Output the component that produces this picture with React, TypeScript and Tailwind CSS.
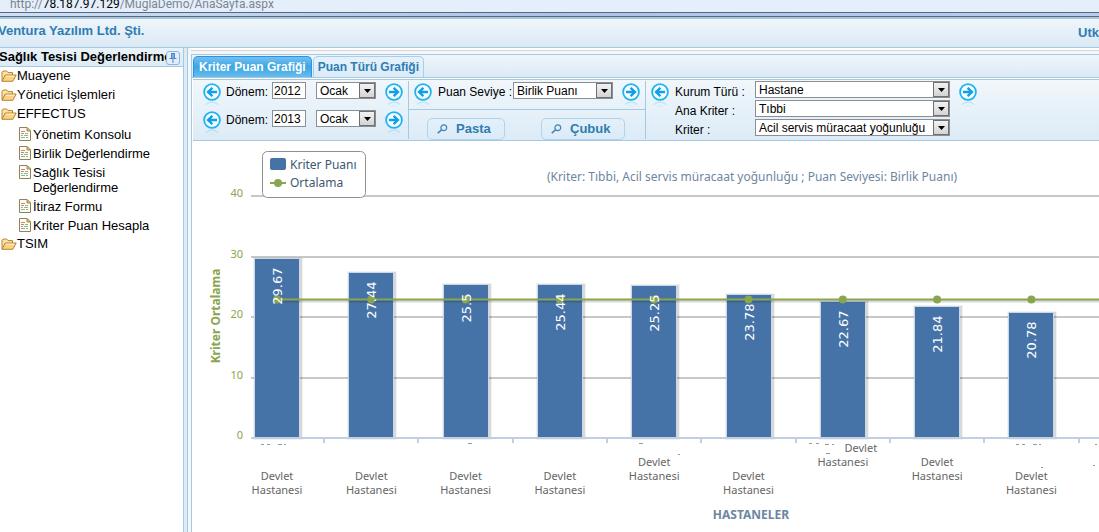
import type { ReactNode } from "react";

const documents = [
  "Yönetim Konsolu",
  "Birlik Değerlendirme",
  "Sağlık Tesisi Değerlendirme",
  "İtiraz Formu",
  "Kriter Puan Hesapla",
];

const AVERAGE = 22.9;
const BASE_Y = 297;
const UNIT = 6.05;
const FIRST_X = 84;
const STEP = 94.3;

// line = row (0-2) on which the wrapped label starts, shift = offset of its first word
const bars = [
  { value: 29.67, line: 2, shift: 0 },
  { value: 27.44, line: 2, shift: 0 },
  { value: 25.5, line: 2, shift: 0 },
  { value: 25.44, line: 2, shift: 0 },
  { value: 25.25, line: 1, shift: 0 },
  { value: 23.78, line: 2, shift: 0 },
  { value: 22.67, line: 0, shift: 18 },
  { value: 21.84, line: 1, shift: 0 },
  { value: 20.78, line: 2, shift: 0 },
];

const gridLines = [10, 20, 30, 40];

function FolderIcon() {
  return (
    <svg width="16" height="14" viewBox="0 0 16 14" className="shrink-0" aria-hidden="true">
      <path d="M1 12V3.2L2.2 2H5.6L7 3.6H11.5V6" fill="#fbe3a4" stroke="#b9812f" />
      <path d="M1 12.3L4.3 6H15.2L11.8 12.3Z" fill="#f8d386" stroke="#b9812f" strokeLinejoin="round" />
      <path d="M4.9 7.2H13.4" stroke="#fff3cf" />
    </svg>
  );
}

function DocumentIcon() {
  return (
    <svg width="12" height="14" viewBox="0 0 12 14" className="shrink-0" aria-hidden="true">
      <path d="M0.5 0.5H8L11.5 4V13.5H0.5Z" fill="#fdfdf6" stroke="#8b8456" />
      <path d="M8 0.5V4H11.5Z" fill="#d8c586" stroke="#a98d46" />
      <path d="M2 4.5H6M2 6.5H5" stroke="#e87777" />
      <path d="M6 6.5H9M2 8.5H4M7 10.5H9" stroke="#9aa8a2" />
      <path d="M5 8.5H9M2 10.5H6" stroke="#7dbb93" />
    </svg>
  );
}

function ArrowButton({ label, flip }: { label: string; flip?: boolean }) {
  return (
    <button type="button" aria-label={label} className="relative size-[18px] shrink-0">
      <svg width="18" height="25" viewBox="0 0 18 25" className={flip ? "-scale-x-100" : ""} aria-hidden="true">
        <circle cx="9" cy="9" r="7.9" fill="#f4fbff" stroke="#1fb4ee" strokeWidth="1.8" />
        <path d="M14 9H5M9.4 4.8L5 9L9.4 13.2" fill="none" stroke="#0f9fe2" strokeWidth="2.3" />
        <path d="M3 21.5Q9 16.5 15 21.5" fill="none" stroke="#19aee8" strokeOpacity="0.2" strokeWidth="1.5" />
        <path d="M6 23.5Q9 21 12 23.5" fill="none" stroke="#19aee8" strokeOpacity="0.1" />
      </svg>
    </button>
  );
}

function Select({ id, value, className, label }: { id: string; value: string; className: string; label?: string }) {
  return (
    <span className={`relative block h-[17px] shrink-0 ${className}`}>
      <select
        id={id}
        aria-label={label}
        defaultValue={value}
        className="block h-full w-full appearance-none border border-[#8b8f94] bg-white pl-[3px] text-[12px] leading-[14px] text-black"
      >
        <option>{value}</option>
      </select>
      <span className="pointer-events-none absolute inset-y-px right-px flex w-4 items-center justify-center border border-[#707070] bg-linear-to-b from-[#f2f2f2] to-[#d4d4d4]">
        <svg width="7" height="4" viewBox="0 0 7 4" aria-hidden="true">
          <path d="M0 0H7L3.5 4Z" fill="#000" />
        </svg>
      </span>
    </span>
  );
}

function ChartButton({ children, className }: { children: ReactNode; className: string }) {
  return (
    <button
      type="button"
      className={`flex h-[22px] items-center gap-2 rounded-[5px] border border-[#b0d3ee] bg-linear-to-b from-[#e4f0f9] to-[#dbebf7] pl-[9px] text-[13px] font-bold text-[#2e7db2] ${className}`}
    >
      <svg width="11" height="10" viewBox="0 0 11 10" fill="none" stroke="#3f84b5" aria-hidden="true">
        <circle cx="6.8" cy="3.8" r="2.9" strokeWidth="1.2" />
        <path d="M4.4 6L0.8 9.2" strokeWidth="1.6" />
      </svg>
      {children}
    </button>
  );
}

function Period({ id, year }: { id: string; year: string }) {
  return (
    <div className="flex h-7 items-start">
      <div className="pt-px">
        <ArrowButton label="Önceki dönem" />
      </div>
      <label htmlFor={id} className="ml-[5px] w-[46px] pt-[2px] leading-4">
        Dönem:
      </label>
      <input
        id={id}
        type="text"
        defaultValue={year}
        className="h-[17px] w-[34px] border border-[#8b8f94] bg-white px-px text-[12px] leading-[14px]"
      />
      <Select id={`${id}-ay`} label="Ay" value="Ocak" className="ml-[10px] w-[60px]" />
      <div className="ml-[9px] pt-px">
        <ArrowButton label="Sonraki dönem" flip />
      </div>
    </div>
  );
}

function Sidebar() {
  return (
    <aside className="w-[184px] shrink-0 border-r border-[#a6c9e2] bg-white">
      <div className="relative h-[19px] overflow-hidden border-b border-[#a6c9e2] bg-linear-to-b from-[#eaf3fa] to-[#dcebf6] text-[13px] leading-[18px] font-bold whitespace-nowrap text-black">
        <span className="-ml-px">Sağlık Tesisi Değerlendirme</span>
        <button
          type="button"
          aria-label="Menüyü sabitle"
          className="absolute top-[3px] right-[3px] flex size-[14px] items-center justify-center rounded-[3px] border border-[#8fb4e0] bg-[#e3eefb]"
        >
          <svg width="8" height="10" viewBox="0 0 8 10" aria-hidden="true">
            <path d="M2 0.5H6M2.5 0.5V5M5.5 0.5V5M0.5 5.5H7.5M4 5.5V10" fill="none" stroke="#4f86cf" />
            <path d="M3 1H5V5H3Z" fill="#7faae0" />
          </svg>
        </button>
      </div>
      <nav className="pl-px text-[13px] text-black">
        <a href="#" className="flex h-[18px] items-center">
          <FolderIcon />
          Muayene
        </a>
        <a href="#" className="flex h-[19px] items-center">
          <FolderIcon />
          Yönetici İşlemleri
        </a>
        <a href="#" className="flex h-[19px] items-center">
          <FolderIcon />
          EFFECTUS
        </a>
        <ul className="pt-1 pl-[18px]">
          {documents.map((item) => (
            <li key={item} className="pb-1 last:pb-[2px]">
              <a href="#" className="flex gap-[2px] leading-[15px]">
                <DocumentIcon />
                <span className="max-w-[120px]">{item}</span>
              </a>
            </li>
          ))}
        </ul>
        <a href="#" className="flex h-[18px] items-center">
          <FolderIcon />
          TSIM
        </a>
      </nav>
    </aside>
  );
}

function Filters() {
  return (
    <form className="flex h-[62px] border-y border-[#a6c9e2] bg-linear-to-b from-[#f1f7fb] to-[#dcebf7] text-[12px] text-black">
      <div className="my-px w-[216px] shrink-0 border-r border-[#a6c9e2] pt-px pl-[10px]">
        <Period id="donem-1" year="2012" />
        <Period id="donem-2" year="2013" />
      </div>
      <div className="my-px w-[237px] shrink-0 border-r border-[#a6c9e2]">
        <div className="flex h-[29px] items-start border-b border-[#a6c9e2] pt-px pl-[5px]">
          <div className="pt-px">
            <ArrowButton label="Önceki seviye" />
          </div>
          <label htmlFor="seviye" className="ml-[6px] w-[75px] pt-[2px] leading-4 whitespace-nowrap">
            Puan Seviye :
          </label>
          <Select id="seviye" value="Birlik Puanı" className="w-[100px]" />
          <div className="ml-[9px] pt-px">
            <ArrowButton label="Sonraki seviye" flip />
          </div>
        </div>
        <div className="flex gap-9 pt-2 pl-[18px]">
          <ChartButton className="w-[78px]">Pasta</ChartButton>
          <ChartButton className="w-[84px]">Çubuk</ChartButton>
        </div>
      </div>
      <div className="flex items-start pt-px pl-[5px]">
        <div className="pt-[2px]">
          <ArrowButton label="Önceki kurum türü" />
        </div>
        <div className="ml-[6px] grid auto-rows-[19px] grid-cols-[80px_195px]">
          <label htmlFor="kurum" className="pt-[3px] leading-4">Kurum Türü :</label>
          <Select id="kurum" value="Hastane" className="w-full" />
          <label htmlFor="ana" className="pt-[3px] leading-4">Ana Kriter :</label>
          <Select id="ana" value="Tıbbi" className="w-full" />
          <label htmlFor="kriter" className="pt-[3px] leading-4">Kriter :</label>
          <Select id="kriter" value="Acil servis müracaat yoğunluğu" className="w-full" />
        </div>
        <div className="ml-[9px] pt-[2px]">
          <ArrowButton label="Sonraki kurum türü" flip />
        </div>
      </div>
    </form>
  );
}

function barTop(value: number) {
  return Math.round(BASE_Y - value * UNIT) + 0.5;
}

function Chart() {
  const averageY = BASE_Y - AVERAGE * UNIT;

  return (
    <svg width="1100" height="391" className="block font-['Noto_Sans',sans-serif]" role="img" aria-label="Kriter Puan Grafiği">
      {gridLines.map((n) => (
        <g key={n}>
          <path d={`M58 ${Math.round(BASE_Y - n * UNIT)}H1100`} stroke="#c8c8c8" strokeWidth="2" />
          <text x="50" y={BASE_Y - n * UNIT + 1} textAnchor="end" fontSize="11" fill="#89a54e">{n}</text>
        </g>
      ))}
      <text x="50" y={BASE_Y + 1} textAnchor="end" fontSize="11" fill="#89a54e">0</text>

      {bars.map((bar, i) => {
        const x = FIRST_X + i * STEP;
        const top = barTop(bar.value);
        const left = Math.round(x - 23) + 0.5;
        const height = BASE_Y - top - 0.5;
        return (
          <g key={i}>
            <rect x={left + 1} y={top + 1} width="45" height={height - 1} fill="none" stroke="#000" strokeOpacity="0.05" strokeWidth="5" />
            <rect x={left + 1} y={top + 1} width="45" height={height - 1} fill="none" stroke="#000" strokeOpacity="0.1" strokeWidth="3" />
            <rect x={left} y={top} width="45" height={height} fill="#4572a7" stroke="#c9d7e8" />
            <path d={`M${Math.round(x + STEP / 2)} 298V302`} stroke="#c0d0e0" strokeWidth="2" />
            <g fontSize="11" fill="#666" textAnchor="middle">
              <text x={x + bar.shift} y={311 + bar.line * 14}>Devlet</text>
              <text x={x} y={325 + bar.line * 14}>Hastanesi</text>
            </g>
          </g>
        );
      })}
      <path d="M58 297H1100" stroke="#c0d0e0" strokeWidth="2" />

      {/* clipped first row of the category labels */}
      <path
        d="M68 303.5h3M74 303.5h3M85 303.5h4M91 303.5h2M275 302.5h4M446 302.5h4M616 302.5h3M623 302.5h3M632 303.5h4M639 303.5h2M633 312.5h4M823 303.5h3M829 303.5h3M840 303.5h4M846 303.5h2M848 326.5h2M902 303.5h2M900 324.5h2M485 313.5h2"
        stroke="#999"
        strokeWidth="1"
      />

      <path d={`M${FIRST_X} ${averageY + 1.5}H1100`} stroke="#000" strokeOpacity="0.15" strokeWidth="3" />
      <path d={`M${FIRST_X} ${averageY}H1100`} stroke="#89a54e" strokeWidth="2" />
      {bars.map((bar, i) => (
        <g key={i}>
          <circle cx={FIRST_X + i * STEP} cy={averageY} r="4" fill="#89a54e" />
          <text
            transform={`translate(${FIRST_X + i * STEP + 5} ${barTop(bar.value) + 9}) rotate(-90)`}
            textAnchor="end"
            fontSize="13"
            fill="#fff"
            className="font-['DejaVu_Sans',sans-serif]"
          >
            {bar.value}
          </text>
        </g>
      ))}

      <text transform="translate(27 175) rotate(-90)" textAnchor="middle" fontSize="12" fontWeight="bold" fill="#89a54e">
        Kriter Ortalama
      </text>
      <text x="558" y="378" textAnchor="middle" fontSize="12" fontWeight="bold" fill="#6d869f">
        HASTANELER
      </text>
      <text x="559" y="40" textAnchor="middle" fontSize="12" fill="#6d869f">
        (Kriter: Tıbbi, Acil servis müracaat yoğunluğu ; Puan Seviyesi: Birlik Puanı)
      </text>

      <rect x="69.5" y="10.5" width="103" height="46" rx="5" fill="#fff" stroke="#909090" />
      <rect x="77" y="17" width="16" height="12" rx="2" fill="#4572a7" />
      <path d="M77 42H93" stroke="#89a54e" strokeWidth="2" />
      <circle cx="85" cy="42" r="4" fill="#89a54e" />
      <g fontSize="12" fill="#3e576f">
        <text x="97" y="28">Kriter Puanı</text>
        <text x="97" y="46">Ortalama</text>
      </g>
    </svg>
  );
}

export default function App() {
  return (
    <div className="flex min-h-screen flex-col overflow-hidden bg-white font-['Liberation_Sans',Arial,sans-serif]">
      {/* browser address bar */}
      <div className="flex h-3 shrink-0 items-end overflow-hidden bg-[#e4effb] pl-[10px]">
        <span className="h-4 font-['Roboto',sans-serif] text-[12px] leading-4 text-[#7d8590]">
          http://<span className="text-black">78.187.97.129</span>/MuglaDemo/AnaSayfa.aspx
        </span>
      </div>
      <div className="h-[5px] shrink-0 border-y border-[#5d6778] bg-linear-to-r from-[#cfe0f6] via-[#a9c6ea] to-[#b5cff0]" />

      <header className="flex h-[31px] shrink-0 items-center justify-between border-t-2 border-b border-[#a6c9e2] bg-linear-to-b from-[#f0f6fb] to-[#dae9f5] text-[13px] font-bold text-[#2e7db2]">
        <span className="-ml-[2px] pb-1">Ventura Yazılım Ltd. Şti.</span>
        <span>Utk</span>
      </header>

      <div className="flex flex-1 bg-[#dfeaf3]">
        <Sidebar />
        <main className="ml-[3px] min-w-0 flex-1 border-l border-[#a6c9e2] bg-[#f3f7fb] pl-[3px]">
          <div className="flex h-full flex-col">
            <div className="mb-[3px] h-[3px] border-b border-[#d5d5d5] bg-white" />
            <div className="flex-1 overflow-hidden border-l border-[#a6c9e2] bg-white">
              <div role="tablist" className="flex h-6 items-end gap-px border-y border-[#a6c9e2] bg-linear-to-b from-[#eff6fb] to-[#dceaf5] pl-px text-[12px] font-bold">
                <button
                  type="button"
                  role="tab"
                  aria-selected="true"
                  className="h-[21px] rounded-t-[5px] border border-b-0 border-[#2694e8] bg-linear-to-b from-[#74bfee] from-0% via-[#3aa6e4] via-50% to-[#68bcec] px-[5px] text-white"
                >
                  Kriter Puan Grafiği
                </button>
                <button
                  type="button"
                  role="tab"
                  aria-selected="false"
                  className="h-[21px] rounded-t-[5px] border border-b-0 border-[#a9cdea] bg-linear-to-b from-[#e6f1fa] to-[#dcebf7] px-1 text-[#2e7db2]"
                >
                  Puan Türü Grafiği
                </button>
              </div>
              <div className="h-px bg-white" />
              <div className="pl-px">
                <Filters />
                <Chart />
              </div>
            </div>
          </div>
        </main>
      </div>
    </div>
  );
}
